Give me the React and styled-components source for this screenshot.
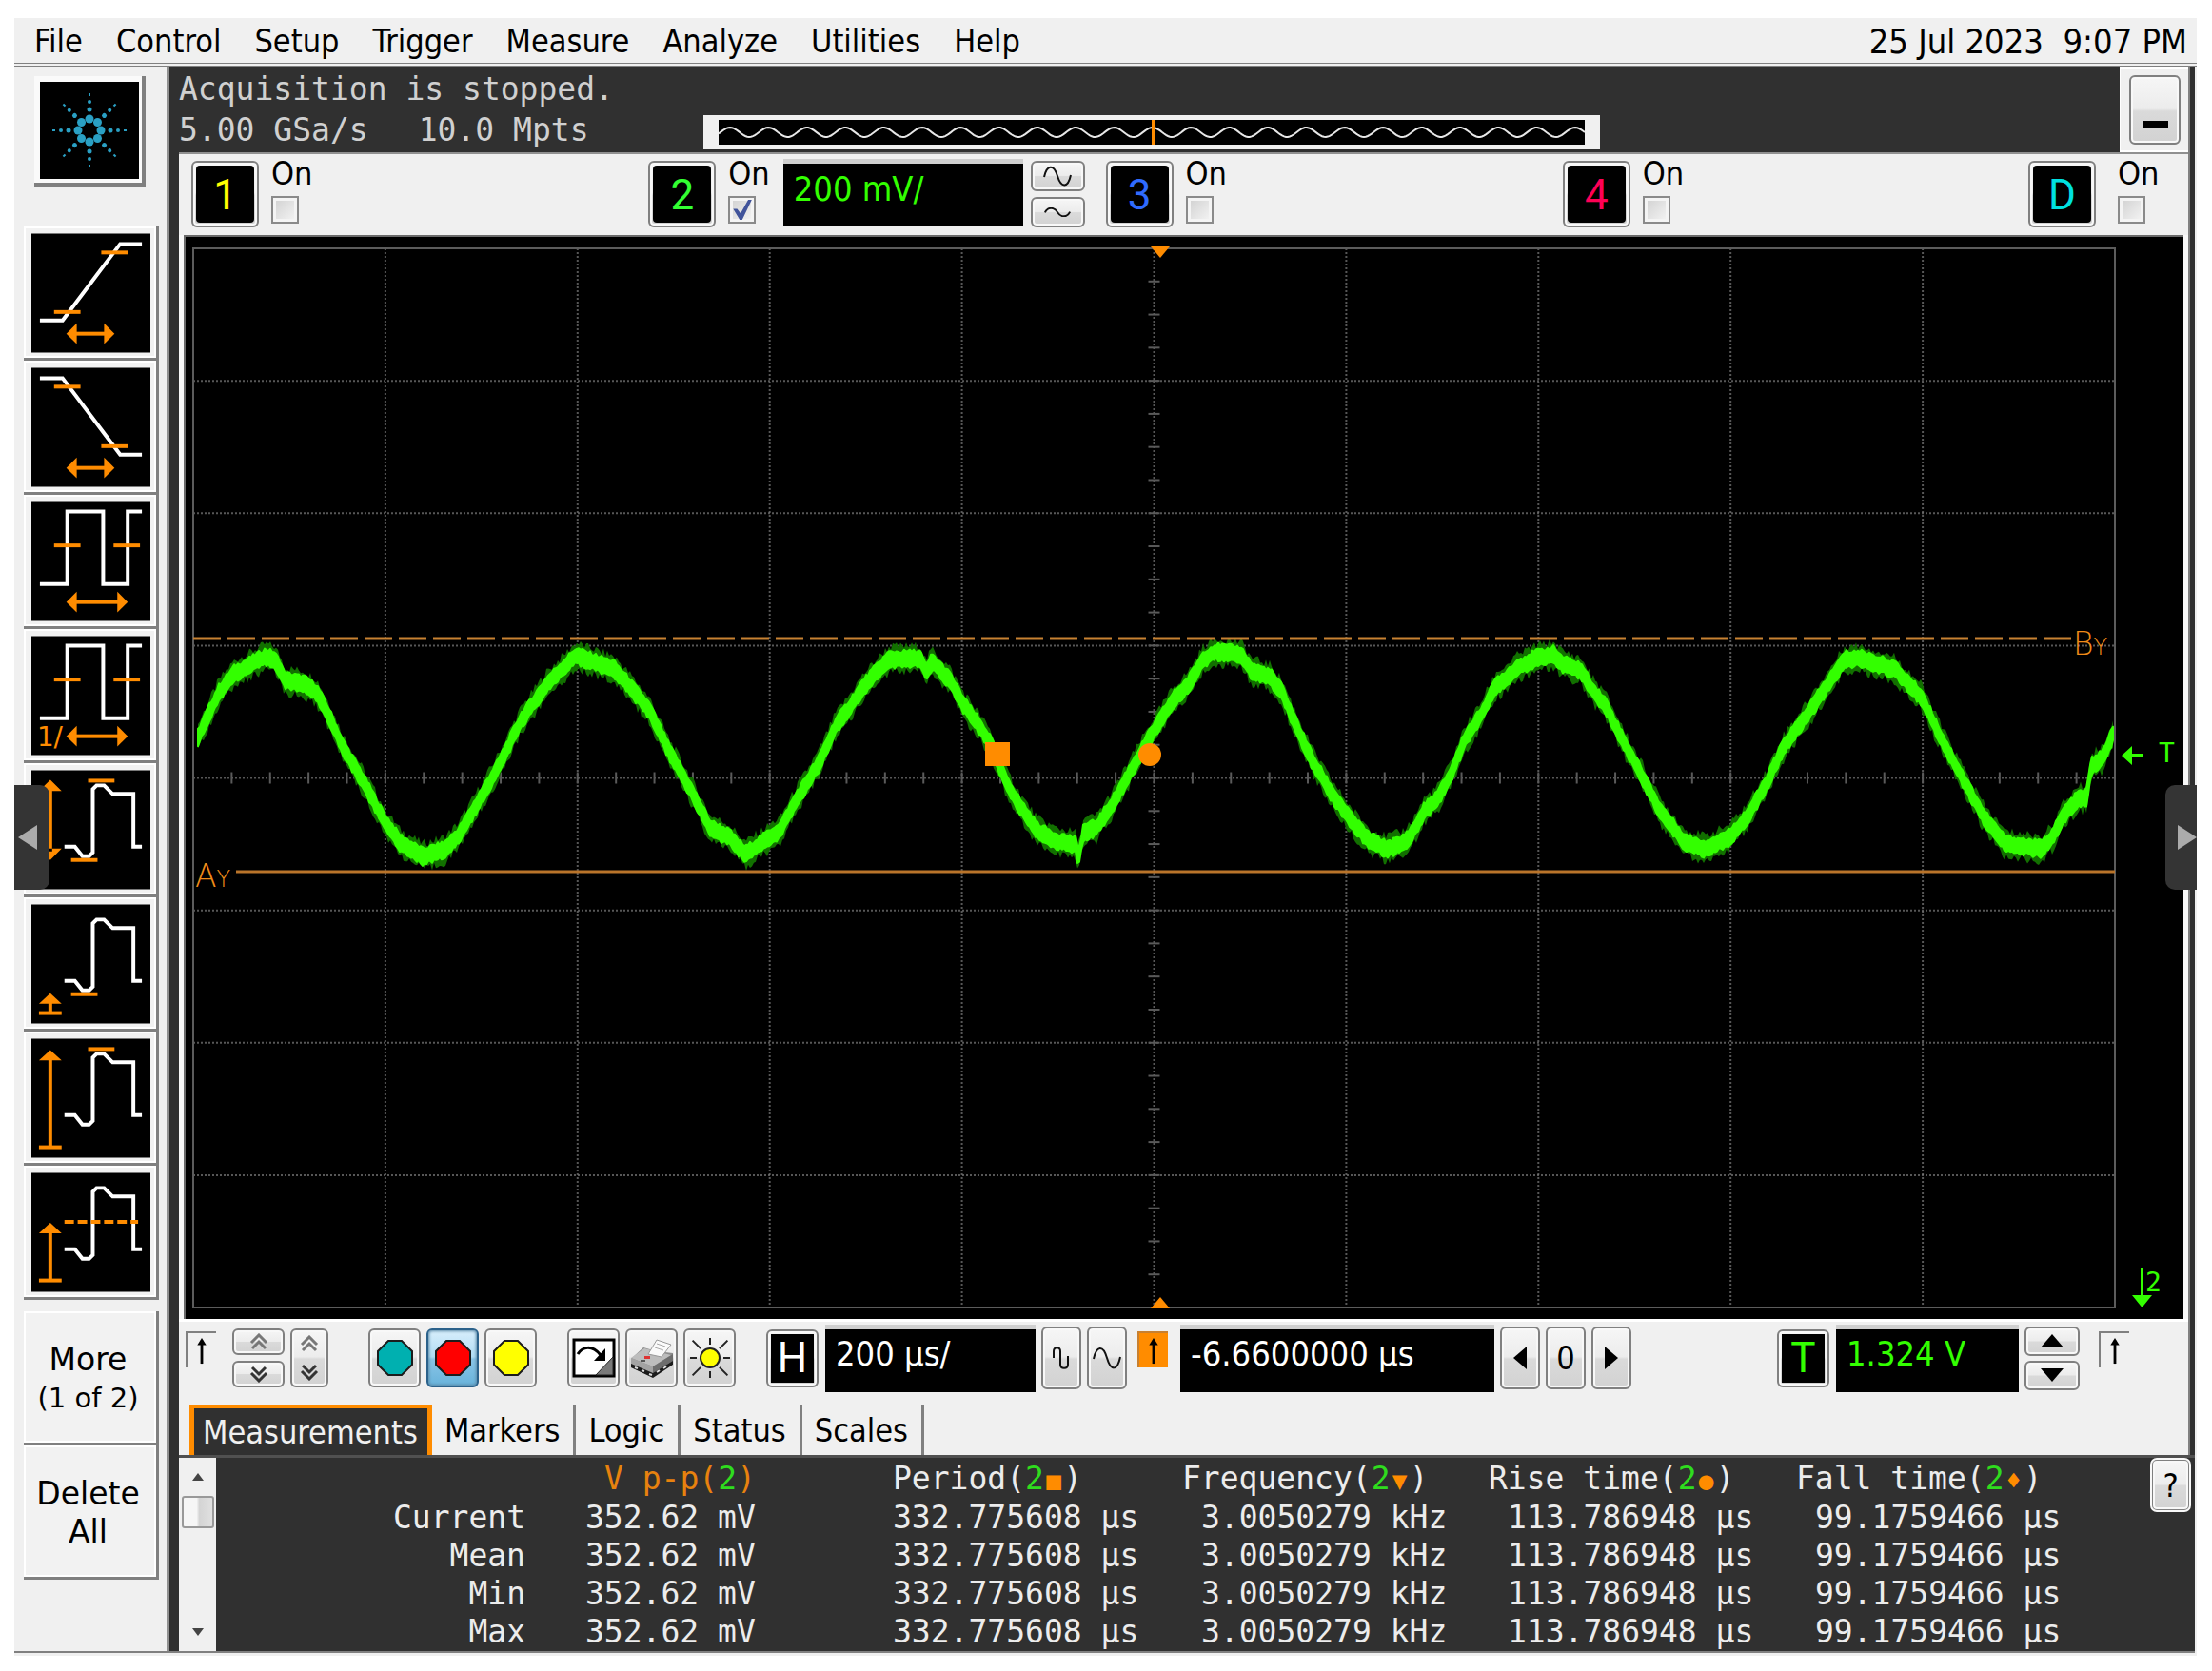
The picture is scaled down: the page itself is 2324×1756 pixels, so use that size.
import React, { useState } from 'react';
import styled, { createGlobalStyle, css } from 'styled-components';

const UI_FONT = "'DejaVu Sans Condensed', 'DejaVu Sans', sans-serif";
const WIDE_FONT = "'DejaVu Sans', sans-serif";
const MONO_FONT = "'DejaVu Sans Mono', monospace";
const KEY_FONT = "Roboto, 'Liberation Sans', sans-serif";

const ORANGE = '#ff8c00';
const GREEN = '#33ff00';

const channels = [
    { id: '1', color: '#ffff00', on: false },
    { id: '2', color: '#33ff33', on: true, scale: '200 mV/' },
    { id: '3', color: '#2f6bff', on: false },
    { id: '4', color: '#ff0055', on: false },
    { id: 'D', color: '#00e0e0', on: false },
];

const menus = ['File', 'Control', 'Setup', 'Trigger', 'Measure', 'Analyze', 'Utilities', 'Help'];
const tabs = ['Measurements', 'Markers', 'Logic', 'Status', 'Scales'];

const columns = [
    { name: 'V p-p', mark: '', value: '352.62 mV', width: 386, head: 83, pad: 63, accent: true },
    { name: 'Period', mark: '■', value: '332.775608 µs', width: 304, head: 0, pad: 0 },
    { name: 'Frequency', mark: '▼', value: '3.0050279 kHz', width: 322, head: 0, pad: 20 },
    { name: 'Rise time', mark: '●', value: '113.786948 µs', width: 323, head: 0, pad: 20 },
    { name: 'Fall time', mark: '♦', value: '99.1759466 µs', width: 323, head: 0, pad: 20 },
];
const statRows = ['Current', 'Mean', 'Min', 'Max'];

/* ---------- waveform ---------- */

// centre line of the channel 2 trace, in plot coordinates
const trace = [
    [15, 528], [24, 508], [37, 481], [53, 461], [68, 453], [86, 443], [95, 446], [101, 455], [106, 468],
    [127, 472], [140, 481], [153, 506], [167, 538], [189, 575], [211, 616], [227, 638], [251, 653], [274, 646],
    [289, 631], [310, 595], [330, 560], [354, 511], [381, 473], [398, 456], [412, 442], [426, 447], [452, 456],
    [470, 476], [490, 501], [510, 543], [531, 580], [553, 623], [573, 633], [590, 651], [609, 638], [627, 625],
    [644, 593], [667, 556], [685, 516], [700, 496], [714, 475], [732, 455], [741, 446], [774, 445], [780, 461],
    [786, 448], [805, 468], [819, 493], [837, 518], [848, 535], [863, 573], [879, 601], [897, 626], [915, 636],
    [937, 641], [940, 656], [945, 628], [959, 623], [977, 596], [995, 563], [1015, 528], [1040, 488], [1055, 473],
    [1071, 446], [1084, 438], [1111, 441], [1122, 458], [1142, 465], [1154, 481], [1169, 516], [1187, 555],
    [1205, 585], [1227, 616], [1245, 636], [1263, 645], [1279, 641], [1290, 630], [1303, 606], [1317, 593],
    [1330, 570], [1346, 530], [1361, 508], [1379, 473], [1387, 468], [1401, 455], [1420, 445], [1439, 441],
    [1449, 451], [1468, 458], [1482, 481], [1494, 495], [1513, 533], [1532, 568], [1551, 605], [1577, 638],
    [1598, 645], [1624, 633], [1643, 611], [1662, 578], [1681, 538], [1705, 505], [1729, 470], [1745, 446],
    [1762, 445], [1797, 456], [1826, 486], [1847, 530], [1871, 575], [1892, 613], [1914, 640], [1952, 645],
    [1963, 633], [1975, 610], [1990, 593], [1999, 591], [2004, 558], [2016, 550], [2028, 522],
];

const noise = (n) => {
    const v = Math.sin(n * 12.9898) * 43758.5453;
    return v - Math.floor(v);
};

const sampleTrace = () => {
    const out = [];
    let i = 0;
    for (let x = trace[0][0]; x <= 2028; x += 2) {
        while (i < trace.length - 2 && trace[i + 1][0] < x) i++;
        const [x0, y0] = trace[i];
        const [x1, y1] = trace[i + 1];
        out.push([x, y0 + ((y1 - y0) * (x - x0)) / (x1 - x0)]);
    }
    return out;
};

const bandPath = (points, half, spread, seed) => {
    const top = points.map(([x, y], i) => `${x},${(y - half - noise(i + seed) * spread).toFixed(1)}`);
    const bottom = points.map(([x, y], i) => `${x},${(y + half + noise(i + seed + 500) * spread).toFixed(1)}`);
    return `M${top.join('L')}L${bottom.reverse().join('L')}Z`;
};

const samples = sampleTrace();
const haloPath = bandPath(samples, 9, 9, 3);
const bodyPath = bandPath(samples, 6, 4, 90);

const memoryPath = (() => {
    let d = '';
    for (let x = 0; x <= 910; x += 2) {
        const y = 13 - 5 * Math.cos(((x - 12) / 40.36) * 2 * Math.PI);
        d += `${x ? 'L' : 'M'}${x},${y.toFixed(1)}`;
    }
    return d;
})();

const LEFT = 10;
const TOP = 14;
const RIGHT = 2029;
const BOTTOM = 1127;
const DIV_X = (RIGHT - LEFT) / 10;
const DIV_Y = (BOTTOM - TOP) / 8;

const Plot = () => {
    const cx = LEFT + DIV_X * 5;
    const cy = TOP + DIV_Y * 4;
    return (
        <PlotSvg viewBox="0 0 2101 1139" role="img" aria-label="Channel 2 waveform">
            <rect width="2101" height="1139" fill="#000" />
            <path d="M0 1H2101M1 0V1139" stroke="#6a6a6a" strokeWidth="2" />
            <g stroke="#7c7c7c" strokeWidth="2" strokeDasharray="2 2">
                {[1, 2, 3, 4, 5, 6, 7, 8, 9].map((n) => (
                    <line key={n} x1={LEFT + DIV_X * n} x2={LEFT + DIV_X * n} y1={TOP} y2={BOTTOM} strokeOpacity="0.7" />
                ))}
                {[1, 2, 3, 4, 5, 6, 7].map((n) => (
                    <line key={n} x1={LEFT} x2={RIGHT} y1={TOP + DIV_Y * n} y2={TOP + DIV_Y * n} strokeOpacity="0.7" />
                ))}
            </g>
            <g stroke="#5a5a5a" strokeWidth="2">
                {Array.from({ length: 49 }, (_, n) => LEFT + (DIV_X / 5) * (n + 1)).map((x) => (
                    <line key={x} x1={x} x2={x} y1={cy - 6} y2={cy + 6} />
                ))}
                {Array.from({ length: 31 }, (_, n) => TOP + (DIV_Y / 4) * (n + 1)).map((y) => (
                    <line key={y} x1={cx - 6} x2={cx + 6} y1={y} y2={y} />
                ))}
            </g>
            <rect x={LEFT} y={TOP} width={RIGHT - LEFT} height={BOTTOM - TOP} fill="none" stroke="#5c5c5c" strokeWidth="2" />

            <path d={haloPath} fill="#127000" />
            <path d={bodyPath} fill={GREEN} stroke={GREEN} strokeWidth="2" strokeLinejoin="round" />

            <line x1={LEFT} x2="1986" y1="424" y2="424" stroke="#c88232" strokeWidth="3" strokeDasharray="29 7" />
            <line x1="55" x2={RIGHT} y1="669" y2="669" stroke="#b9742a" strokeWidth="3" />
            <PlotLabel x="12" y="685" fill="#f08c18">A<tspan fontSize="24">Y</tspan></PlotLabel>
            <PlotLabel x="1985" y="441" fill="#f08c18">B<tspan fontSize="24">Y</tspan></PlotLabel>

            <rect x="842" y="533" width="26" height="25" fill={ORANGE} />
            <circle cx="1015" cy="546" r="12" fill={ORANGE} />
            <path d="M1016 12h20l-10 12z" fill={ORANGE} />
            <path d="M1016 1128h20l-10 -12z" fill={ORANGE} />

            <path d="M2036 547L2047 537V545H2059V549H2047V557Z" fill={GREEN} />
            <PlotLabel x="2075" y="554" fill={GREEN} $small>T</PlotLabel>
            <path d="M2056 1085H2059V1114H2068L2057.500 1127L2047 1114H2056Z" fill={GREEN} />
            <PlotLabel x="2061" y="1110" fill={GREEN} $small>2</PlotLabel>
        </PlotSvg>
    );
};

/* ---------- icons ---------- */

const IconText = styled.text`
    fill: ${ORANGE};
    stroke: none;
    font-family: ${WIDE_FONT};
    font-size: 28px;
`;

const HArrow = ({ from, to }) => (
    <g fill={ORANGE}>
        <rect x={from + 8} y="104" width={to - from - 16} height="4" />
        <path d={`M${from} 106l11 -11v22z`} />
        <path d={`M${to} 106l-11 -11v22z`} />
    </g>
);

const UpArrow = ({ tip, base }) => (
    <g fill={ORANGE}>
        <rect x="18" y={tip + 6} width="4" height={base - tip - 6} />
        <path d={`M20 ${tip}l12 11h-24z`} />
        <rect x="8" y={base - 2} width="24" height="4" />
    </g>
);

const Tick = ({ x, y }) => <rect x={x} y={y - 2} width="28" height="4" fill={ORANGE} />;

const PULSE = 'M35 81H46L54 91H61L65 87V20L69 16H77L86 25H108V81H117';
const SQUARE = 'M9 87H38V10H76V87H102V10H117';

const measureIcons = [
    {
        label: 'Rise time',
        art: <><path d="M9 92H33L94 11H117" /><Tick x={24} y={83} /><Tick x={74} y={20} /><HArrow from={37} to={88} /></>,
    },
    {
        label: 'Fall time',
        art: <><path d="M9 11H33L94 92H117" /><Tick x={24} y={20} /><Tick x={74} y={83} /><HArrow from={37} to={88} /></>,
    },
    {
        label: 'Period',
        art: <><path d={SQUARE} /><Tick x={24} y={46} /><Tick x={87} y={46} /><HArrow from={37} to={102} /></>,
    },
    {
        label: 'Frequency',
        art: (
            <>
                <path d={SQUARE} /><Tick x={24} y={46} /><Tick x={87} y={46} /><HArrow from={37} to={102} />
                <IconText x="6" y="116">1/</IconText>
            </>
        ),
    },
    {
        label: 'V p-p',
        art: (
            <>
                <path d={PULSE} /><Tick x={60} y={11} /><Tick x={42} y={95} />
                <path d="M18 20H22V86H18Z M20 10l12 12h-24z M20 95l12 -12h-24z" fill={ORANGE} stroke="none" />
            </>
        ),
    },
    { label: 'V min', art: <><path d={PULSE} /><Tick x={42} y={95} /><UpArrow tip={94} base={115} /></> },
    { label: 'V max', art: <><path d={PULSE} /><Tick x={60} y={11} /><UpArrow tip={12} base={115} /></> },
    {
        label: 'V average',
        art: (
            <>
                <path d={PULSE} />
                <path d="M35 52H113" stroke={ORANGE} strokeDasharray="10 4" />
                <UpArrow tip={53} base={114} />
            </>
        ),
    },
];

const Logo = () => (
    <svg viewBox="0 0 104 102" width="104" height="102" aria-hidden="true">
        <rect width="104" height="102" fill="#000" />
        <g fill="#2aa0c4">
            {[0, 45, 90, 135, 180, 225, 270, 315].map((a) => (
                <g key={a} transform={`rotate(${a} 52 51)`}>
                    <circle cx="52" cy="39" r="4.500" />
                    <circle cx="52" cy="29" r="2.500" />
                    <circle cx="52" cy="21" r="2" />
                    <rect x="51" y="12" width="2" height="3" />
                </g>
            ))}
        </g>
    </svg>
);

const EdgeIcon = () => (
    <svg viewBox="0 0 32 38" width="32" height="38" aria-hidden="true">
        <path d="M16 8V34" stroke="currentColor" strokeWidth="3" />
        <path d="M16 5l5 8h-10z" fill="currentColor" />
    </svg>
);

const Chevron = ({ down }) => (
    <svg viewBox="0 0 20 18" width="20" height="18" aria-hidden="true">
        <g fill="none" stroke={down ? '#333' : '#777'} strokeWidth="3" transform={down ? 'rotate(180 10 9)' : undefined}>
            <path d="M2 10L10 2L18 10" />
            <path d="M3 16L10 9L17 16" />
        </g>
    </svg>
);

const Arrow = ({ d, w = 26, h = 16 }) => (
    <svg viewBox={`0 0 ${w} ${h}`} width={w} height={h} aria-hidden="true"><path d={d} /></svg>
);

const Sine = ({ w, h }) => (
    <svg viewBox="0 0 32 24" width={w} height={h} preserveAspectRatio="none" aria-hidden="true">
        <path d="M2 13C5 -1 12 -2 16 12S27 26 30 11" fill="none" stroke="#111" strokeWidth="2" vectorEffect="non-scaling-stroke" />
    </svg>
);

// one tall and narrow cycle, for the faster sweep speed
const NarrowSine = () => (
    <svg viewBox="0 0 20 26" width="20" height="26" aria-hidden="true">
        <path d="M2 13V6C2 1 9 1 9 6V20C9 25 17 25 17 20V11" fill="none" stroke="#111" strokeWidth="2" />
    </svg>
);

const Octagon = ({ fill }) => (
    <svg viewBox="0 0 40 40" width="40" height="40" aria-hidden="true">
        <path d="M13 2H27L38 13V27L27 38H13L2 27V13Z" fill={fill} stroke="#1c1c1c" strokeWidth="2" />
    </svg>
);

const ClearIcon = () => (
    <svg viewBox="0 0 46 42" width="46" height="42" aria-hidden="true">
        <rect x="2" y="2" width="42" height="38" fill="#fff" stroke="#000" strokeWidth="3" />
        <path d="M43 20V39H25Z" fill="#7a7a7a" stroke="#222" strokeWidth="1" />
        <path d="M6 17C11 9 21 7 30 18" fill="none" stroke="#000" strokeWidth="3" />
        <path d="M35 11V24H23Z" />
    </svg>
);

const PrinterIcon = () => (
    <svg viewBox="0 0 46 42" width="46" height="42" aria-hidden="true">
        <path d="M1 22L14 10L28 14L45 16V27L24 41L1 31Z" fill="#8c8c8c" />
        <path d="M1 21L15 11L43 18L24 30Z" fill="#bdbdbd" />
        <path d="M19 17L28 2L43 7L33 20Z" fill="#fafafa" stroke="#999" strokeWidth="1" />
        <path d="M26 10l9 3M28 6l9 3" stroke="#aaa" strokeWidth="1" />
        <path d="M1 21V27L24 37V30Z" fill="#a3a3a3" />
        <path d="M24 30L45 17V24L24 37Z" fill="#6d6d6d" />
        <path d="M1 27L24 37L45 24V28L24 42L1 31Z" fill="#1c1c1c" />
        <path d="M5 31l3 1M12 34l3 1M20 38l3 1M28 36l3 -2M35 32l3 -2" stroke="#ddd" strokeWidth="2" />
        <rect x="15" y="19" width="6" height="3" fill="#d33" />
        <rect x="11" y="23" width="5" height="2" fill="#555" />
    </svg>
);

const SunIcon = () => (
    <svg viewBox="0 0 44 44" width="44" height="44" aria-hidden="true">
        <g stroke="#222" strokeWidth="2">
            {[0, 45, 90, 135, 180, 225, 270, 315].map((a) => (
                <line key={a} x1="22" x2="22" y1={a % 90 ? -4 : 1} y2="8" transform={`rotate(${a} 22 22)`} />
            ))}
        </g>
        <circle cx="22" cy="22" r="10" fill="#ffff00" stroke="#222" strokeWidth="2" />
    </svg>
);

/* ---------- page ---------- */

const App = () => {
    const [enabled, setEnabled] = useState(() => Object.fromEntries(channels.map((c) => [c.id, c.on])));
    const [tab, setTab] = useState('Measurements');

    const toggle = (id) => setEnabled((prev) => ({ ...prev, [id]: !prev[id] }));

    return (
        <>
            <GlobalStyle />
            <Window>
                <MenuBar>
                    {menus.map((m) => <MenuItem key={m} type="button">{m}</MenuItem>)}
                    <Clock>25 Jul 2023{'  '}9:07 PM</Clock>
                </MenuBar>

                <Body>
                    <Sidebar>
                        <LogoButton type="button" aria-label="Run control"><Logo /></LogoButton>
                        <MeasureList>
                            {measureIcons.map(({ label, art }) => (
                                <SideButton key={label} type="button" aria-label={label}>
                                    <MeasureArt viewBox="0 0 126 126" aria-hidden="true">
                                        <rect width="126" height="126" fill="#000" />
                                        <g fill="none" stroke="#fff" strokeWidth="4">{art}</g>
                                    </MeasureArt>
                                </SideButton>
                            ))}
                        </MeasureList>
                        <MeasureList>
                            <TextButton type="button">More<SmallLine>(1 of 2)</SmallLine></TextButton>
                            <TextButton type="button">Delete<br />All</TextButton>
                        </MeasureList>
                    </Sidebar>

                    <Main>
                        <Upper>
                            <StatusBar>
                                <StatusText>
                                    <div>Acquisition is stopped.</div>
                                    <Rates><span>5.00 GSa/s</span><span>10.0 Mpts</span></Rates>
                                </StatusText>
                                <MemoryBar>
                                    <svg viewBox="0 0 910 26" width="100%" height="26" preserveAspectRatio="none" aria-hidden="true">
                                        <rect width="910" height="26" fill="#000" />
                                        <path d={memoryPath} fill="none" stroke="#e8e8e8" strokeWidth="2" />
                                        <rect x="455" width="4" height="26" fill={ORANGE} />
                                    </svg>
                                </MemoryBar>
                                <MinimizeBox>
                                    <MinimizeButton type="button" aria-label="Minimize"><Dash /></MinimizeButton>
                                </MinimizeBox>
                            </StatusBar>

                            <ChannelBar>
                                {channels.map((c) => (
                                    <Channel key={c.id} $last={c.id === 'D'}>
                                        <ChannelKey type="button" $color={c.color}><span>{c.id}</span></ChannelKey>
                                        <OnLabel $wide={c.id === 'D'}>
                                            On
                                            <CheckBox type="checkbox" checked={enabled[c.id]} onChange={() => toggle(c.id)} />
                                        </OnLabel>
                                        {c.scale && (
                                            <>
                                                <Readout $width={252} $color={GREEN} $gap={14} defaultValue={c.scale} aria-label="Channel 2 scale" />
                                                <Stack $gap={6}>
                                                    <KeyButton type="button" $w={57} $h={32} aria-label="Larger"><Sine w={32} h={22} /></KeyButton>
                                                    <KeyButton type="button" $w={57} $h={32} aria-label="Smaller"><Sine w={30} h={10} /></KeyButton>
                                                </Stack>
                                            </>
                                        )}
                                    </Channel>
                                ))}
                            </ChannelBar>

                            <PlotFrame><Plot /></PlotFrame>

                            <Toolbar>
                                <EdgeBox><EdgeIcon /></EdgeBox>
                                <Group $gap={17}>
                                    <Stack $gap={6}>
                                        <KeyButton type="button" $w={55} $h={28} aria-label="Move up"><Chevron /></KeyButton>
                                        <KeyButton type="button" $w={55} $h={28} aria-label="Move down"><Chevron down /></KeyButton>
                                    </Stack>
                                    <KeyButton type="button" $w={40} $h={62} $split aria-label="Page"><Chevron /><Chevron down /></KeyButton>
                                </Group>
                                <Group $gap={42}>
                                    <KeyButton type="button" $w={55} $h={62} aria-label="Run"><Octagon fill="#00b0b0" /></KeyButton>
                                    <KeyButton type="button" $w={55} $h={62} $active aria-label="Stop"><Octagon fill="#ff0000" /></KeyButton>
                                    <KeyButton type="button" $w={55} $h={62} aria-label="Single"><Octagon fill="#ffff00" /></KeyButton>
                                </Group>
                                <Group $gap={32}>
                                    <KeyButton type="button" $w={55} $h={62} aria-label="Clear display"><ClearIcon /></KeyButton>
                                    <KeyButton type="button" $w={55} $h={62} aria-label="Print"><PrinterIcon /></KeyButton>
                                    <KeyButton type="button" $w={55} $h={62} aria-label="Intensity"><SunIcon /></KeyButton>
                                </Group>
                                <Group $gap={32}>
                                    <AxisKey type="button" $color="#fff"><span>H</span></AxisKey>
                                    <Readout $width={221} $color="#fff" defaultValue="200 µs/" aria-label="Time scale" />
                                    <KeyButton type="button" $w={42} $h={66} aria-label="Zoom out"><NarrowSine /></KeyButton>
                                    <KeyButton type="button" $w={42} $h={66} aria-label="Zoom in"><Sine w={32} h={24} /></KeyButton>
                                </Group>
                                <EdgeBox $filled><EdgeIcon /></EdgeBox>
                                <Group $gap={12}>
                                    <Readout $width={330} $color="#fff" defaultValue="-6.6600000 µs" aria-label="Time position" />
                                    <KeyButton type="button" $w={42} $h={66} aria-label="Left"><Arrow w={16} h={26} d="M15 1V25L1 13Z" /></KeyButton>
                                    <KeyButton type="button" $w={42} $h={66}>0</KeyButton>
                                    <KeyButton type="button" $w={42} $h={66} aria-label="Right"><Arrow w={16} h={26} d="M1 1V25L15 13Z" /></KeyButton>
                                </Group>
                                <TriggerGroup>
                                    <AxisKey type="button" $color={GREEN}><span>T</span></AxisKey>
                                    <Readout $width={192} $color={GREEN} defaultValue="1.324 V" aria-label="Trigger level" />
                                    <Stack $gap={5}>
                                        <KeyButton type="button" $w={58} $h={31} aria-label="Level up"><Arrow d="M13 1L25 15H1Z" /></KeyButton>
                                        <KeyButton type="button" $w={58} $h={31} aria-label="Level down"><Arrow d="M13 15L25 1H1Z" /></KeyButton>
                                    </Stack>
                                </TriggerGroup>
                                <EdgeBox $gap={20}><EdgeIcon /></EdgeBox>
                            </Toolbar>

                            <TabList role="tablist">
                                {tabs.map((t) => (
                                    <Tab key={t} type="button" role="tab" aria-selected={t === tab} $active={t === tab} onClick={() => setTab(t)}>
                                        {t}
                                    </Tab>
                                ))}
                            </TabList>
                        </Upper>

                        <Results>
                            <ScrollBar>
                                <Arrow w={14} h={10} d="M7 1L13 9H1Z" />
                                <Thumb />
                                <Arrow w={14} h={10} d="M7 9L13 1H1Z" />
                            </ScrollBar>
                            <StatTable>
                                <colgroup>
                                    <col width="325" />
                                    {columns.map((c) => <col key={c.name} width={c.width} />)}
                                    <col />
                                </colgroup>
                                <thead>
                                    <tr>
                                        <HeadCell />
                                        {columns.map((c) => (
                                            <HeadCell key={c.name} scope="col" $pad={c.head} $accent={c.accent}>
                                                {c.name}(<Source>2</Source>{c.mark && <Mark>{c.mark}</Mark>})
                                            </HeadCell>
                                        ))}
                                    </tr>
                                </thead>
                                <tbody>
                                    {statRows.map((r) => (
                                        <tr key={r}>
                                            <RowHead scope="row">{r}</RowHead>
                                            {columns.map((c) => <Cell key={c.name} $pad={c.pad}>{c.value}</Cell>)}
                                        </tr>
                                    ))}
                                </tbody>
                            </StatTable>
                            <HelpButton type="button">?</HelpButton>
                        </Results>
                    </Main>
                </Body>

                <Handle $side="left" type="button" aria-label="Previous"><Arrow w={24} h={30} d="M22 2V28L2 15Z" /></Handle>
                <Handle $side="right" type="button" aria-label="Next"><Arrow w={22} h={30} d="M2 2V28L22 15Z" /></Handle>
            </Window>
        </>
    );
};

const GlobalStyle = createGlobalStyle`
    * {
        box-sizing: border-box;
    }
    body {
        margin: 0;
        background: #fff;
        color: #000;
        font-family: ${UI_FONT};
        font-size: 34px;
    }
    button, input {
        margin: 0;
        padding: 0;
        font: inherit;
        color: inherit;
    }
    svg {
        display: block;
        flex: none;
    }
`;

const keyFace = css`
    border: 2px solid #808080;
    border-radius: 6px;
    background: linear-gradient(#f6f6f6 0%, #ececec 48%, #dadada 52%, #d2d2d2 100%);
    box-shadow: inset 0 0 0 2px #f8f8f8;
`;

const Window = styled.div`
    position: relative;
    margin: 19px 16px 15px 15px;
    padding-bottom: 3px;
    background: #f0f0f0;
`;

const MenuBar = styled.nav`
    display: flex;
    align-items: center;
    gap: 35px;
    height: 51px;
    padding: 2px 10px 0 21px;
    border-bottom: 4px double #808080;
    white-space: nowrap;
`;

const MenuItem = styled.button`
    border: 0;
    background: none;
    line-height: 45px;
`;

const Clock = styled.time`
    margin-left: auto;
    font-size: 36px;
    line-height: 45px;
    white-space: pre;
`;

const Body = styled.div`
    display: grid;
    grid-template-columns: 163px minmax(0, 1fr);
    margin-right: 2px;
    border-bottom: 2px solid #808080;
`;

const Sidebar = styled.aside`
    display: flex;
    flex-direction: column;
    gap: 12px;
    padding: 10px 8px 0 10px;
    border-right: 3px solid #909090;
`;

const LogoButton = styled.button`
    align-self: flex-start;
    margin: 0 0 30px 11px;
    padding: 6px 3px 4px 6px;
    border: solid #808080;
    border-width: 0 4px 4px 0;
    background: #fafafa;
`;

const MeasureList = styled.div`
    display: flex;
    flex-direction: column;
`;

const SideButton = styled.button`
    height: 141px;
    padding: 7px 6px 5px 8px;
    border: solid #808080;
    border-width: 0 3px 3px 0;
    background: #f2f2f2;
    box-shadow: inset 2px 2px 0 #fff, inset -2px -2px 0 #fff;
`;

const TextButton = styled(SideButton)`
    padding: 4px 4px 0 0;
    font-family: ${WIDE_FONT};
    font-size: 33px;
    line-height: 40px;
`;

const MeasureArt = styled.svg`
    width: 125px;
    height: 126px;

    g g, g rect {
        stroke: none;
    }
`;

const SmallLine = styled.span`
    display: block;
    font-size: 29px;
`;

const Main = styled.main`
    padding-left: 10px;
    background: #303030;
`;

const Upper = styled.div`
    margin-right: 5px;
    border-right: 2px solid #808080;
`;

const StatusBar = styled.header`
    display: flex;
    align-items: flex-end;
    height: 90px;
    color: #d0d0d0;
`;

const StatusText = styled.div`
    width: 551px;
    padding-bottom: 2px;
    font-family: ${MONO_FONT};
    font-size: 33px;
    line-height: 43px;
    white-space: nowrap;
`;

const Rates = styled.div`
    display: flex;
    gap: 53px;
`;

const MemoryBar = styled.div`
    flex: 0 1 942px;
    margin-bottom: 3px;
    padding: 5px 16px;
    background: #f0f0f0;
`;

const MinimizeBox = styled.div`
    align-self: stretch;
    margin-left: auto;
    padding: 7px 8px 6px 9px;
    border: solid #fff;
    border-width: 2px 0 2px 1px;
    background: #f0f0f0;
`;

const MinimizeButton = styled.button`
    ${keyFace}
    display: flex;
    align-items: flex-end;
    justify-content: center;
    width: 54px;
    height: 73px;
    padding-bottom: 16px;
`;

const Dash = styled.span`
    width: 27px;
    height: 7px;
    background: #000;
`;

const ChannelBar = styled.section`
    display: grid;
    grid-template-columns: repeat(4, minmax(0, 1fr)) 177px;
    height: 87px;
    padding: 5px 0 0 13px;
    border-top: 2px solid #909090;
    background: #f0f0f0;
`;

const Channel = styled.div`
    display: flex;
    align-items: flex-start;
    padding-left: ${(p) => (p.$last ? 9 : 0)}px;
`;

const blackKey = css`
    ${keyFace}
    display: flex;
    flex: none;
    padding: 3px;

    span {
        flex: 1;
        align-self: stretch;
        border-radius: 4px;
        background: #000;
        color: ${(p) => p.$color};
        font-family: ${KEY_FONT};
    }
`;

const ChannelKey = styled.button`
    ${blackKey}
    width: 71px;
    height: 70px;
    margin-top: 2px;

    span {
        font-size: 44px;
        line-height: 62px;
    }
`;

const AxisKey = styled.button`
    ${blackKey}
    width: 55px;
    height: 61px;

    span {
        border-radius: 0;
        font-size: 44px;
        line-height: 50px;
    }
`;

const OnLabel = styled.label`
    display: flex;
    flex-direction: column;
    gap: 9px;
    margin-left: ${(p) => (p.$wide ? 23 : 13)}px;
    line-height: 30px;
`;

const CheckBox = styled.input`
    appearance: none;
    width: 29px;
    height: 29px;
    border: 2px solid #8a8a8a;
    background: linear-gradient(135deg, #cfcfcf, #f6f6f6);
    box-shadow: inset 0 0 0 3px #f4f4f4;

    &:checked::after {
        content: '';
        display: block;
        width: 21px;
        height: 21px;
        margin: 2px;
        background: #41549b;
        clip-path: polygon(5% 45%, 25% 45%, 42% 68%, 80% 0, 98% 0, 50% 100%, 38% 100%);
    }
`;

const Readout = styled.input`
    width: ${(p) => p.$width}px;
    height: 71px;
    margin-left: ${(p) => p.$gap || 1}px;
    padding: 0 0 14px 11px;
    border: 0;
    border-top: 5px solid #cfcfcf;
    background: #000;
    color: ${(p) => p.$color};
    font-size: 36px;
    outline: 0;
`;

const Stack = styled.div`
    display: flex;
    flex-direction: column;
    gap: ${(p) => p.$gap}px;

    ${Channel} & {
        margin: 2px 0 0 8px;
    }
`;

const KeyButton = styled.button`
    ${keyFace}
    display: flex;
    flex-direction: column;
    align-items: center;
    justify-content: ${(p) => (p.$split ? 'space-between' : 'center')};
    width: ${(p) => p.$w}px;
    height: ${(p) => p.$h}px;
    padding: ${(p) => (p.$split ? '5px 0' : 0)};
    ${(p) => p.$active && css`
        border-color: #2c628b;
        background: linear-gradient(#d8eefb 0%, #b0dcf4 48%, #8ac4e6 52%, #68b3db 100%);
        box-shadow: inset 0 0 3px 1px #5b8aa8;
    `}
`;

const PlotFrame = styled.div`
    padding: 0 5px;
    background: #f8f8f8;
`;

const PlotSvg = styled.svg`
    width: 100%;
    height: auto;
`;

const PlotLabel = styled.text`
    font-family: ${(p) => (p.$small ? MONO_FONT : WIDE_FONT)};
    font-size: ${(p) => (p.$small ? 28 : 33)}px;
    font-weight: ${(p) => (p.$small ? 400 : 200)};
`;

const Toolbar = styled.section`
    display: flex;
    align-items: center;
    height: 90px;
    padding: 2px 62px 13px 7px;
    border-top: 3px solid #fff;
    background: #f0f0f0;
`;

const Group = styled.div`
    display: flex;
    align-items: center;
    gap: 6px;
    margin-left: ${(p) => p.$gap}px;
`;

const TriggerGroup = styled(Group)`
    margin-left: auto;
`;

const EdgeBox = styled.div`
    align-self: flex-start;
    margin: 8px 0 0 ${(p) => (p.$filled ? 11 : p.$gap || 0)}px;
    border: solid #808080;
    border-width: 2px 0 0 2px;
    ${(p) => p.$filled && css`
        border-color: #c88030;
        background: ${ORANGE};
    `}

    svg {
        width: 30px;
        height: 36px;
    }
`;

const TabList = styled.div`
    display: flex;
    align-items: stretch;
    height: 53px;
    padding-left: 11px;
    background: #f0f0f0;
`;

const Tab = styled.button`
    padding: 0 14px 0 13px;
    border: solid #808080;
    border-width: 0 3px 0 0;
    background: none;
    line-height: 46px;
    ${(p) => p.$active && css`
        padding: 0 10px 0 9px;
        border: solid ${ORANGE};
        border-width: 4px 5px 0 5px;
        background: #303030;
        color: #f0f0f0;
    `}
`;

const Results = styled.section`
    display: flex;
    align-items: flex-start;
    padding-right: 5px;
    border-top: 3px solid #505050;
`;

const ScrollBar = styled.div`
    display: flex;
    flex: none;
    flex-direction: column;
    align-items: center;
    align-self: stretch;
    width: 39px;
    padding: 15px 0;
    background: #f0f0f0;
    fill: #444;
`;

const Thumb = styled.div`
    width: 34px;
    height: 34px;
    margin: 15px 0 auto;
    border: 2px solid #999;
    border-radius: 3px;
    background: linear-gradient(90deg, #f6f6f6 0 45%, #d4d4d4 55%, #e0e0e0);
`;

const StatTable = styled.table`
    flex: 1;
    width: 100%;
    table-layout: fixed;
    border-collapse: collapse;
    color: #ececec;
    font-family: ${MONO_FONT};
    font-size: 33px;
    white-space: nowrap;
`;

const HeadCell = styled.th`
    height: 43px;
    padding: 0 0 0 ${(p) => p.$pad || 0}px;
    color: ${(p) => (p.$accent ? '#e8820e' : 'inherit')};
    font-weight: 400;
    line-height: 40px;
    text-align: left;
`;

const Source = styled.span`
    color: #2fdc1e;
`;

const Mark = styled.span`
    display: inline-block;
    width: 20px;
    color: ${ORANGE};
    font-size: 26px;
    line-height: 30px;
    text-align: center;
`;

const RowHead = styled.th`
    padding: 0;
    font-weight: 400;
    line-height: 40px;
    text-align: right;
`;

const Cell = styled.td`
    padding: 0 0 0 ${(p) => p.$pad}px;
    line-height: 40px;
`;

const HelpButton = styled.button`
    ${keyFace}
    flex: none;
    width: 41px;
    height: 55px;
    margin-top: 1px;
    outline: 2px solid #f8f8f8;
    outline-offset: -1px;
`;

const Handle = styled.button`
    position: absolute;
    top: 50%;
    ${(p) => p.$side}: 0;
    display: flex;
    align-items: center;
    justify-content: flex-end;
    width: ${(p) => (p.$side === 'left' ? 37 : 33)}px;
    height: 110px;
    padding-right: ${(p) => (p.$side === 'left' ? 11 : 0)}px;
    border: 0;
    border-radius: ${(p) => (p.$side === 'left' ? '0 10px 10px 0' : '10px 0 0 10px')};
    background: #343434;
    fill: #ababab;
    transform: translateY(-50%);
`;

export default App;
